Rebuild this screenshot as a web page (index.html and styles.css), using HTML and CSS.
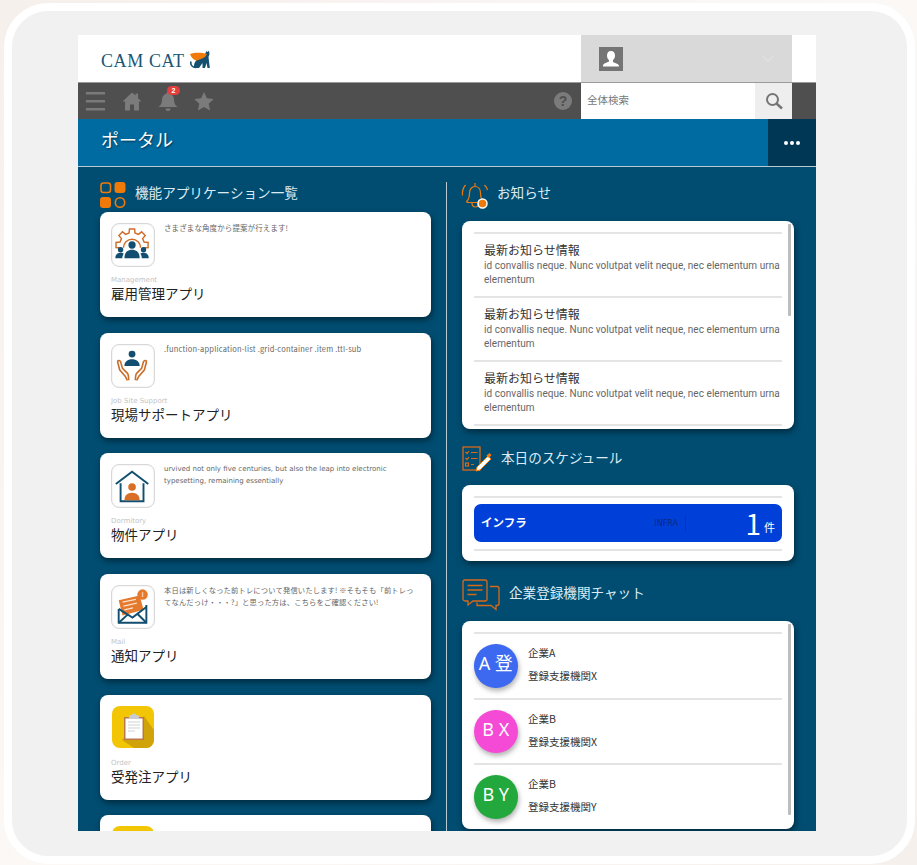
FILE: index.html
```html
<!DOCTYPE html>
<html lang="ja">
<head>
<meta charset="utf-8">
<title>ポータル</title>
<link rel="stylesheet" href="styles.css">
</head>
<body>
<div class="frame">
<div class="app">
  <header class="topbar">
    <div class="logo">
      <span class="logo-text">CAM CAT</span>
      <svg class="logo-cat" viewBox="0 0 21 19" width="21" height="19">
        <path d="M6 17.500C2 17.500 .2 14.500 1 11.500" fill="none" stroke="#14506f" stroke-width="1.600"/>
        <path d="M4 18C3.500 13 6 9 11 8L15 4 16.500 1 17.500 2 19 .8 19.500 4 18.500 7 19.800 18H17.500L16.500 13 15 18H12.500L12.500 13 9 18z" fill="#14506f"/>
        <path d="M0 4C4 2.500 11 2 17 4L15 7C11 9 8 10.500 6 10.500 3 9.500 1 7 0 4z" fill="#ef7a0a"/>
      </svg>
    </div>
    <div class="user-box">
      <span class="user-avatar">
        <svg viewBox="0 0 24 24" width="24" height="24"><path d="M12 4c-2.600 0-4 2-4 4.500 0 2 .8 3.600 2 4.500v1.500c-2 1-5 1.600-6 3.500v1.500h16V18.500c-1-1.900-4-2.500-6-3.500V13c1.200-.9 2-2.500 2-4.500C16 6 14.600 4 12 4z" fill="#fff"/></svg>
      </span>
      <svg class="chevron" viewBox="0 0 12 7" width="12" height="7"><path d="M1 1l5 5 5-5" fill="none" stroke="#e6e6e6" stroke-width="1"/></svg>
    </div>
  </header>

  <nav class="navbar">
    <div class="nav-icons">
      <svg viewBox="0 0 20 19" width="20" height="19"><path d="M0 1.250h19M0 9.250h19M0 17.250h19" stroke="#7b7b7b" stroke-width="2.500"/></svg>
      <svg viewBox="0 0 20 19" width="20" height="19"><path d="M10 0.500L0.500 9.500h2.500V18.500h5v-6h4v6h5V9.500h2.500L16 6V1.500h-2.500v2z" fill="#7b7b7b"/></svg>
      <span class="bell">
        <svg viewBox="0 0 20 19" width="20" height="19"><path d="M10 0c1 0 1.500.7 1.500 1.500C14.500 2.300 16 5 16 8c0 3 1 5 3.500 7H.5C3 13 4 11 4 8c0-3 1.500-5.700 4.500-6.500C8.500.7 9 0 10 0zM7.500 16.500h5a2.500 2.500 0 0 1-5 0z" fill="#7b7b7b"/></svg>
        <span class="badge">2</span>
      </span>
      <svg viewBox="0 0 20 19" width="20" height="19"><path d="M10 0l2.900 6.300 6.900.8-5.100 4.600 1.400 6.800L10 15l-6.100 3.500 1.400-6.800L.2 7.100l6.900-.8z" fill="#7b7b7b"/></svg>
    </div>
    <span class="help">?</span>
    <div class="search">
      <span class="search-text">全体検索</span>
      <span class="search-btn">
        <svg viewBox="0 0 18 18" width="18" height="18"><circle cx="7.500" cy="7.500" r="5.500" fill="none" stroke="#757575" stroke-width="2"/><path d="M11.500 11.500l5.500 5" stroke="#757575" stroke-width="2.500"/></svg>
      </span>
    </div>
  </nav>

  <div class="titlebar">
    <h1 class="page-title">ポータル</h1>
    <span class="more"><i></i><i></i><i></i></span>
  </div>

  <main class="content">
    <section class="col-left">
      <h2 class="heading heading-left">
        <svg class="heading-icon" viewBox="0 0 26 26" width="26" height="26">
          <rect x="1" y="1" width="9.500" height="9.500" rx="2.500" fill="none" stroke="#ef7a0a" stroke-width="1.600"/>
          <rect x="14.500" y="0" width="11" height="11" rx="3" fill="#ef7a0a"/>
          <rect x="0" y="15" width="11" height="11" rx="3" fill="#ef7a0a"/>
          <circle cx="20" cy="20.500" r="4.700" fill="none" stroke="#ef7a0a" stroke-width="1.600"/>
        </svg>
        <span>機能アプリケーション一覧</span>
      </h2>
      <div class="card-list">
        <article class="card">
          <div class="card-top">
            <span class="app-icon">
              <svg viewBox="0 0 44 44" width="42" height="42">
                <g transform="translate(-1 2)" fill="none" stroke="#cf6d28" stroke-width="1.500">
                  <path d="M9 24L9.400 23.100 5.200 22.700 5.200 17.300 9.400 16.900 10.900 13.300 8.200 10 12 6.200 15.300 8.900 18.900 7.400 19.300 3.200 24.700 3.200 25.100 7.400 28.700 8.900 32 6.200 35.800 10 33.100 13.300 34.600 16.900 38.800 17.300 38.800 22.700 34.600 23.100 35 24"/>
                  <path d="M13 23a9 9 0 0 1 18 0"/>
                </g>
                <g fill="#114e6f">
                  <circle cx="21" cy="22" r="3.800"/><path d="M13 36c0-6 3-9 8-9s8 3 8 9z"/>
                  <circle cx="9" cy="27" r="2.800"/><path d="M3.500 36c0-4 2-6 5.500-6 1.500 0 2.500.4 3.300 1-1 1.400-1.500 3-1.600 5z"/>
                  <circle cx="33" cy="27" r="2.800"/><path d="M38.500 36c0-4-2-6-5.500-6-1.500 0-2.500.4-3.300 1 1 1.400 1.500 3 1.600 5z"/>
                </g>
              </svg>
            </span>
            <p class="card-desc">さまざまな角度から提案が行えます!</p>
          </div>
          <div class="card-label">Management</div>
          <div class="card-title">雇用管理アプリ</div>
        </article>

        <article class="card">
          <div class="card-top">
            <span class="app-icon">
              <svg viewBox="0 0 44 44" width="42" height="42">
                <circle cx="21" cy="9.500" r="3.600" fill="#114e6f"/>
                <path d="M13 22c0-4.500 3.500-7 8-7s8 2.500 8 7z" fill="#114e6f"/>
                <path d="M16 37l-2-4-6-7-2-8c-.5-2 2-2.500 3-.5l2 7 5 5c1.500 1.500 1.500 3.500 1.500 7.500M26 37l2-4 6-7 2-8c.5-2-2-2.500-3-.5l-2 7-5 5c-1.500 1.500-1.500 3.500-1.500 7.500" fill="none" stroke="#c96f2c" stroke-width="1.700"/>
              </svg>
            </span>
            <p class="card-desc card-desc-code">.function-application-list .grid-container .item .ttl-sub</p>
          </div>
          <div class="card-label">Job Site Support</div>
          <div class="card-title">現場サポートアプリ</div>
        </article>

        <article class="card">
          <div class="card-top">
            <span class="app-icon">
              <svg viewBox="0 0 44 44" width="42" height="42">
                <path d="M4 20L21 7l17 13" fill="none" stroke="#114e6f" stroke-width="2"/>
                <path d="M9 19v19h24V19" fill="none" stroke="#114e6f" stroke-width="2"/>
                <circle cx="21" cy="23" r="4" fill="#d96f25"/>
                <path d="M13 37c0-5 3-8 8-8s8 3 8 8z" fill="#d96f25"/>
              </svg>
            </span>
            <p class="card-desc card-desc-en">urvived not only five centuries, but also the leap into electronic typesetting, remaining essentially</p>
          </div>
          <div class="card-label">Dormitory</div>
          <div class="card-title">物件アプリ</div>
        </article>

        <article class="card">
          <div class="card-top">
            <span class="app-icon">
              <svg viewBox="0 0 44 44" width="42" height="42">
                <path d="M7 15l22-5 4 15-22 6z" fill="#e5792c"/>
                <path d="M11 17l14-3M12 21l14-3M13 25l9-2" stroke="#fbe2cf" stroke-width="1.300"/>
                <circle cx="32" cy="9" r="5.500" fill="#e5792c"/><path d="M32 6.500v5" stroke="#f9c9a5" stroke-width="1.500"/>
                <path d="M7 24v14.500h29V20" fill="none" stroke="#114e6f" stroke-width="2"/>
                <path d="M7 24l14.500 9L36 22M7 38.500l10-9M36 38.500l-10-10" fill="none" stroke="#114e6f" stroke-width="2"/>
              </svg>
            </span>
            <p class="card-desc card-desc-wide">本日は新しくなった前トレについて発信いたします! ※そもそも「前トレってなんだっけ・・・?」と思った方は、こちらをご確認ください!</p>
          </div>
          <div class="card-label">Mail</div>
          <div class="card-title">通知アプリ</div>
        </article>

        <article class="card">
          <div class="card-top">
            <span class="app-icon app-icon-yellow">
              <svg viewBox="0 0 42 42" width="42" height="42">
                <rect width="42" height="42" rx="8" fill="#f2c605"/>
                <path d="M32 10L42 24v10a8 8 0 0 1-8 8H22L10 34z" fill="#d0a30a"/>
                <rect x="12" y="11" width="20" height="23" fill="#b9794a"/>
                <rect x="13.500" y="12.500" width="17" height="20" fill="#fff"/>
                <path d="M16 15h12v2H16zM16 18h12v2H16zM16 21h12v2H16zM16 24h7v2h-7z" fill="#e6e8ea"/>
                <path d="M17 11c0-1.500 1-2 3-2 0-1 1-1.500 2-1.500s2 .5 2 1.500c2 0 3 .5 3 2v2H17z" fill="#c8ccd0"/>
              </svg>
            </span>
          </div>
          <div class="card-label">Order</div>
          <div class="card-title">受発注アプリ</div>
        </article>

        <article class="card">
          <div class="card-top">
            <span class="app-icon app-icon-yellow">
              <svg viewBox="0 0 42 42" width="42" height="42"><rect width="42" height="42" rx="8" fill="#f2c605"/></svg>
            </span>
          </div>
        </article>
      </div>
    </section>

    <section class="col-right">
      <h2 class="heading heading-news">
        <svg class="heading-icon icon-low" viewBox="0 0 28 28" width="28" height="28">
          <path d="M6 20c2-2 2.500-4 2.500-8 0-4 2.500-6.500 5.500-6.500s5.500 2.500 5.500 6.500c0 4 .5 6 2.500 8 1 1-.5 1.500-2 1.500H8C6.500 21.500 5 21 6 20zM11 22c0 3 1.500 4 3.500 4 1.500 0 2.500-.6 3-2M14 2v3.500M4.500 4C2 7 1 10 1.500 14.500M23.500 4c1.500 1.500 2.500 3 3 5" fill="none" stroke="#ef7a0a" stroke-width="1.200"/>
          <circle cx="21.500" cy="22.500" r="4.500" fill="#ef7a0a" stroke="#fff" stroke-width="1.500"/>
        </svg>
        <span>お知らせ</span>
      </h2>
      <div class="panel panel-news">
        <span class="scrollbar scrollbar-news"></span>
        <div class="news-row">
          <div class="news-title">最新お知らせ情報</div>
          <div class="news-desc">id convallis neque. Nunc volutpat velit neque, nec elementum urna elementum</div>
        </div>
        <div class="news-row">
          <div class="news-title">最新お知らせ情報</div>
          <div class="news-desc">id convallis neque. Nunc volutpat velit neque, nec elementum urna elementum</div>
        </div>
        <div class="news-row">
          <div class="news-title">最新お知らせ情報</div>
          <div class="news-desc">id convallis neque. Nunc volutpat velit neque, nec elementum urna elementum</div>
        </div>
        <div class="news-row"></div>
      </div>

      <h2 class="heading heading-schedule">
        <svg class="heading-icon icon-mid" viewBox="0 0 30 26" width="30" height="26">
          <rect x="1" y="1" width="17" height="23" fill="none" stroke="#d9691a" stroke-width="1.300"/>
          <path d="M3.500 6l1.500 1.500L7 5M3.500 12l1.500 1.500L7 11M9 6.500h6.500M9 12.500h6.500M9 18.500h3" fill="none" stroke="#d9691a" stroke-width="1.200"/>
          <rect x="3.500" y="17" width="3" height="3" fill="none" stroke="#d9691a" stroke-width="1.200"/>
          <path d="M15 21l11-11 3 3-11 11-4 1z" fill="#fff" stroke="#ef7a0a" stroke-width="1"/>
          <path d="M24.500 9.500l3-2.500 2 2-2.500 3z" fill="#ef7a0a"/>
        </svg>
        <span>本日のスケジュール</span>
      </h2>
      <div class="panel panel-schedule">
        <div class="schedule-wrap">
          <div class="schedule-row">
            <span class="schedule-name">インフラ</span>
            <span class="schedule-code">INFRA</span>
            <span class="schedule-count"><b>1</b><small>件</small></span>
          </div>
        </div>
      </div>

      <h2 class="heading heading-chat">
        <svg class="heading-icon icon-low" viewBox="0 0 38 32" width="38" height="32">
          <path d="M3 1h20a2 2 0 0 1 2 2v17a2 2 0 0 1-2 2H11l-5 4v-4H3a2 2 0 0 1-2-2V3a2 2 0 0 1 2-2z" fill="none" stroke="#d9691a" stroke-width="1.300"/>
          <path d="M5.500 6.500h15M5.500 11h15M5.500 15.500h9" stroke="#d9691a" stroke-width="1.300"/>
          <path d="M28 7.500h7a2 2 0 0 1 2 2v15a2 2 0 0 1-2 2h-1v4l-5-4H15v-3" fill="none" stroke="#d9691a" stroke-width="1.300"/>
        </svg>
        <span>企業登録機関チャット</span>
      </h2>
      <div class="panel panel-chat">
        <span class="scrollbar scrollbar-chat"></span>
        <div class="chat-row">
          <span class="avatar avatar-blue">A 登</span>
          <div class="chat-text"><div>企業A</div><div>登録支援機関X</div></div>
        </div>
        <div class="chat-row">
          <span class="avatar avatar-pink">B X</span>
          <div class="chat-text"><div>企業B</div><div>登録支援機関X</div></div>
        </div>
        <div class="chat-row">
          <span class="avatar avatar-green">B Y</span>
          <div class="chat-text"><div>企業B</div><div>登録支援機関Y</div></div>
        </div>
      </div>
    </section>
  </main>
</div>
</div>
</body>
</html>
```
FILE: styles.css
```css
* { box-sizing: border-box; }
html, body { margin: 0; height: 100%; }
body {
  background: linear-gradient(135deg, #f6f0ec, #fbf8f6 50%, #f6f0ec);
  font-family: "Noto Sans CJK JP", "Noto Sans", sans-serif;
  overflow: hidden;
}
.frame {
  width: 911px;
  height: 861px;
  margin: 3px 0 0 4px;
  padding: 24px 0 0 66px;
  background: #f1f1f1;
  border: 8px solid #fff;
  border-radius: 44px;
}
.app {
  width: 738px;
  height: 796px;
  overflow: hidden;
  background: #004d71;
  display: flex;
  flex-direction: column;
}

/* top bar */
.topbar {
  height: 48px;
  flex: none;
  background: #fff;
  border-bottom: 1px solid #9a9a9a;
  display: flex;
  justify-content: space-between;
}
.logo { display: flex; align-items: center; gap: 5px; padding: 6px 0 0 23px; }
.logo-text {
  font-family: "Liberation Serif", serif;
  font-size: 18px;
  letter-spacing: .6px;
  color: #1b5674;
}
.logo-cat { margin-top: -4px; }
.user-box {
  width: 211px;
  margin-right: 24px;
  padding: 0 18px;
  background: #d9d9d9;
  display: flex;
  align-items: center;
  justify-content: space-between;
}
.user-avatar { width: 24px; height: 24px; background: #757575; display: block; }
.user-avatar svg { display: block; }

/* nav */
.navbar {
  height: 36px;
  flex: none;
  background: #4f4f4f;
  display: flex;
  align-items: center;
  padding-left: 8px;
}
.nav-icons { display: flex; gap: 16px; align-items: center; flex: 1; padding-top: 1px; }
.nav-icons svg { display: block; }
.bell { position: relative; display: block; }
.badge {
  position: absolute;
  left: 9px;
  top: -6px;
  width: 13px;
  height: 9px;
  border-radius: 5px;
  background: #e1403c;
  color: #fff;
  font: bold 7px/9px "Liberation Sans", sans-serif;
  text-align: center;
}
.help {
  width: 18px;
  height: 18px;
  margin-right: 9px;
  border-radius: 50%;
  background: #7b7b7b;
  color: #4f4f4f;
  font: bold 14px/18px "Liberation Sans", sans-serif;
  text-align: center;
}
.search {
  width: 211px;
  height: 36px;
  margin-right: 24px;
  background: #fff;
  display: flex;
  align-items: center;
  justify-content: space-between;
}
.search-text { padding: 0 0 3px 6px; font-size: 10.500px; color: #777; }
.search-btn {
  width: 37px;
  height: 36px;
  background: #eee;
  display: flex;
  align-items: center;
  justify-content: center;
}

/* title */
.titlebar {
  height: 48px;
  flex: none;
  background: #006ba1;
  border-bottom: 1px solid #b9c9d2;
  display: flex;
  justify-content: space-between;
  align-items: stretch;
}
.page-title {
  margin: 0;
  padding-left: 23px;
  font-size: 18px;
  line-height: 40px;
  font-weight: 400;
  color: #fff;
  text-shadow: 1px 1px 2px rgba(0,0,0,.5);
}
.more {
  width: 48px;
  background: #003755;
  display: flex;
  align-items: center;
  justify-content: center;
  gap: 2px;
}
.more i { width: 4px; height: 4px; border-radius: 50%; background: #fff; display: block; }

/* content */
.content {
  flex: 1;
  min-height: 0;
  display: flex;
  padding-top: 15px;
}
.col-left {
  width: 369px;
  flex: none;
  padding: 0 15px 0 22px;
  border-right: 1px solid #b9c9d2;
  overflow: hidden;
}
.col-right {
  width: 347px;
  flex: none;
  padding-left: 15px;
  margin-top: -3px;
}
.heading {
  margin: 0 0 16px;
  height: 26px;
  display: flex;
  align-items: center;
  gap: 8px;
  font-size: 13.600px;
  line-height: 26px;
  font-weight: 400;
  color: #dcebf3;
}
.heading-news { gap: 8px; margin-left: -1px; }
.heading-left { margin-bottom: 4px; gap: 9px; align-items: flex-start; line-height: 20px; }
.heading-icon { flex: none; }
.icon-low { margin-top: 6px; }
.icon-mid { margin-top: 4px; }
.heading-schedule { margin: 15px 0 15px; gap: 9px; }
.heading-chat { margin-top: 18px; gap: 9px; }

/* cards */
.card-list { display: flex; flex-direction: column; gap: 15.700px; }
.card {
  height: 105px;
  flex: none;
  padding: 11px;
  background: #fff;
  border-radius: 8px;
  box-shadow: 1px 3px 6px rgba(0,0,0,.45);
}
.card-top { display: flex; gap: 9px; height: 44px; }
.app-icon {
  width: 44px;
  height: 44px;
  flex: none;
  border: 1px solid #d8d8d8;
  border-radius: 8px;
  box-shadow: inset 0 0 2px rgba(0,0,0,.12);
  display: block;
}
.app-icon svg { display: block; }
.app-icon-yellow { border: 0; box-shadow: none; padding-left: 1px; }
.card-desc {
  margin: -1px 0 0;
  font-size: 7.500px;
  line-height: 12px;
  color: #666;
  letter-spacing: .1px;
}
.card-desc-code { letter-spacing: .2px; }
.card-desc-wide { font-size: 7.300px; letter-spacing: .15px; margin-right: 2px; }
.card-desc-en { font-family: "DejaVu Sans", sans-serif; font-size: 7px; letter-spacing: 0; }
.card-label {
  margin-top: 8px;
  font: 7px/10px "DejaVu Sans", sans-serif;
  color: #c4c4c4;
}
.card-title { font-size: 13.500px; line-height: 17px; color: #222; }

/* panels */
.panel {
  position: relative;
  width: 332px;
  padding: 11px 12px;
  background: #fff;
  border-radius: 8px;
  box-shadow: 1px 3px 6px rgba(0,0,0,.45);
  overflow: hidden;
}
.panel-news { height: 208px; }
.panel-schedule { height: 76px; }
.panel-chat { height: 208px; }
.scrollbar { position: absolute; right: 3px; top: 3px; width: 3px; background: #bdbdbd; border-radius: 1px; }
.scrollbar-news { height: 92px; }
.scrollbar-chat { height: 191px; }

.news-row { border-top: 2px solid #e4e4e4; height: 64px; padding: 7px 0 0 10px; }
.news-title { font-size: 12px; line-height: 18px; color: #333; }
.news-desc { font: 10px/14px Roboto, sans-serif; letter-spacing: .05px; color: #666; margin-right: -8px; }

.schedule-wrap {
  height: 55px;
  border-top: 2px solid #e4e4e4;
  border-bottom: 2px solid #e4e4e4;
  padding-top: 6px;
}
.schedule-row {
  display: flex;
  align-items: center;
  height: 38px;
  background: #0040d8;
  border-radius: 7px;
  color: #fff;
  padding: 0 7px;
}
.schedule-name { font-size: 11.500px; font-weight: 700; flex: 1; padding-bottom: 2px; }
.schedule-code { font: 8px/17px "DejaVu Sans", sans-serif; color: #0a2a7a; padding-right: 7px; border-right: 1px solid #0a34a8; }
.schedule-count { width: 89px; text-align: right; font-size: 11px; line-height: 1; }
.schedule-count b { font-weight: 400; font-size: 28px; margin-right: 3px; vertical-align: -3px; }
.schedule-count small { font-size: 11px; }

.chat-row {
  border-top: 2px solid #e4e4e4;
  height: 65.500px;
  padding-top: 10px;
  display: flex;
  gap: 10.500px;
}
.avatar {
  width: 43.500px;
  height: 43.500px;
  flex: none;
  border-radius: 50%;
  color: #fff;
  font: 18px/38px "Noto Sans", "Noto Sans CJK JP", sans-serif;
  text-align: center;
  box-shadow: 1px 3px 5px rgba(0,0,0,.3);
}
.avatar-blue { background: #3d68f0; }
.avatar-pink { background: #f54ad6; }
.avatar-green { background: #22a83c; }
.chat-text { font-size: 10.500px; line-height: 23px; color: #333; margin-top: -3px; }
```
